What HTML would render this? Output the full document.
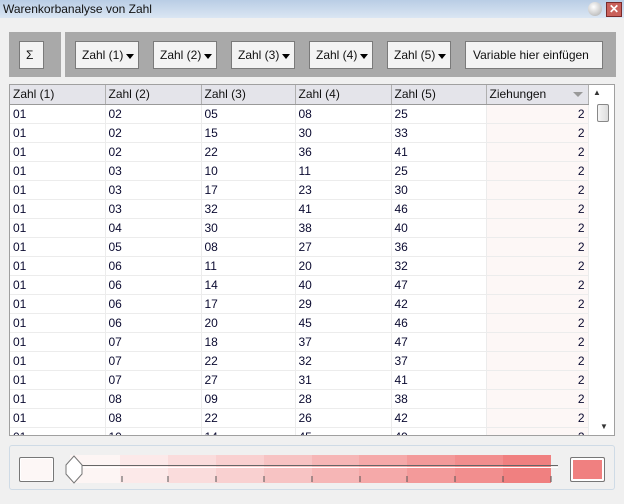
<!DOCTYPE html>
<html><head><style>
*{margin:0;padding:0;box-sizing:border-box}
body{width:624px;height:504px;background:#f0f0f0;font-family:"Liberation Sans",sans-serif;font-size:12px;position:relative;overflow:hidden;color:#111}
.abs{position:absolute}
.title{left:0;top:0;width:624px;height:18px;background:linear-gradient(#b9cde5,#dbe6f3);color:#111;padding:2px 3px;font-size:12px}
.panel{background:#a9a9a9}
.btn{background:#f3f3f3;border:1px solid #7a7a7a;display:flex;align-items:center;padding-left:6px}
.btn .ar{position:absolute;right:4px;top:12px;width:0;height:0;border-left:4px solid transparent;border-right:4px solid transparent;border-top:5px solid #000}
table{border-collapse:collapse;table-layout:fixed}
td,th{height:19px;padding:0 3px;font-weight:normal;text-align:left;white-space:nowrap;overflow:hidden;border-right:1px solid #ececec;border-bottom:1px solid #ececec;color:#0a0a30}
th{background:#e4e4ea;border-right:1px solid #b0b0b0;border-bottom:1px solid #999;height:19px;color:#111}
td.z{background:#fdf7f6;text-align:right}
</style></head><body>
<div class="abs title">Warenkorbanalyse von Zahl</div>
<div class="abs" style="left:588px;top:2px;width:14px;height:14px;border-radius:50%;background:radial-gradient(circle at 40% 35%,#fff,#aaa)"></div>
<div class="abs" style="left:606px;top:2px;width:16px;height:15px;background:#c9605a;border:1px solid #7a2a2a;color:#fff;font-size:12px;font-weight:bold;text-align:center;line-height:13px">✕</div>

<div class="abs panel" style="left:9px;top:32px;width:52px;height:45px"></div>
<div class="abs panel" style="left:65px;top:32px;width:551px;height:45px"></div>
<div class="abs btn" style="left:19px;top:41px;width:25px;height:28px">Σ</div>
<div class="abs btn" style="left:75px;top:41px;width:40px;height:28px">Zahl (1)<span class="ar"></span></div>
<div class="abs btn" style="left:153px;top:41px;width:64px;height:28px">Zahl (2)<span class="ar"></span></div>
<div class="abs btn" style="left:231px;top:41px;width:64px;height:28px">Zahl (3)<span class="ar"></span></div>
<div class="abs btn" style="left:309px;top:41px;width:64px;height:28px">Zahl (4)<span class="ar"></span></div>
<div class="abs btn" style="left:387px;top:41px;width:64px;height:28px">Zahl (5)<span class="ar"></span></div>
<div class="abs btn" style="left:465px;top:41px;width:138px;height:28px;padding-left:7px">Variable hier einfügen</div>
<div class="abs btn" style="left:75px;top:41px;width:64px;height:28px">Zahl (1)<span class="ar"></span></div>

<div class="abs" style="left:9px;top:84px;width:606px;height:352px;background:#fff;border:1px solid #a0a0a0;overflow:hidden">
<table style="width:578px">
<colgroup><col style="width:95px"><col style="width:96px"><col style="width:94px"><col style="width:96px"><col style="width:95px"><col style="width:102px"></colgroup>
<tr><th>Zahl (1)</th><th>Zahl (2)</th><th>Zahl (3)</th><th>Zahl (4)</th><th>Zahl (5)</th><th style="position:relative">Ziehungen<span style="position:absolute;right:5px;top:7px;border-left:5px solid transparent;border-right:5px solid transparent;border-top:5px solid #999"></span></th></tr>
<tr><td>01</td><td>02</td><td>05</td><td>08</td><td>25</td><td class="z">2</td></tr>
<tr><td>01</td><td>02</td><td>15</td><td>30</td><td>33</td><td class="z">2</td></tr>
<tr><td>01</td><td>02</td><td>22</td><td>36</td><td>41</td><td class="z">2</td></tr>
<tr><td>01</td><td>03</td><td>10</td><td>11</td><td>25</td><td class="z">2</td></tr>
<tr><td>01</td><td>03</td><td>17</td><td>23</td><td>30</td><td class="z">2</td></tr>
<tr><td>01</td><td>03</td><td>32</td><td>41</td><td>46</td><td class="z">2</td></tr>
<tr><td>01</td><td>04</td><td>30</td><td>38</td><td>40</td><td class="z">2</td></tr>
<tr><td>01</td><td>05</td><td>08</td><td>27</td><td>36</td><td class="z">2</td></tr>
<tr><td>01</td><td>06</td><td>11</td><td>20</td><td>32</td><td class="z">2</td></tr>
<tr><td>01</td><td>06</td><td>14</td><td>40</td><td>47</td><td class="z">2</td></tr>
<tr><td>01</td><td>06</td><td>17</td><td>29</td><td>42</td><td class="z">2</td></tr>
<tr><td>01</td><td>06</td><td>20</td><td>45</td><td>46</td><td class="z">2</td></tr>
<tr><td>01</td><td>07</td><td>18</td><td>37</td><td>47</td><td class="z">2</td></tr>
<tr><td>01</td><td>07</td><td>22</td><td>32</td><td>37</td><td class="z">2</td></tr>
<tr><td>01</td><td>07</td><td>27</td><td>31</td><td>41</td><td class="z">2</td></tr>
<tr><td>01</td><td>08</td><td>09</td><td>28</td><td>38</td><td class="z">2</td></tr>
<tr><td>01</td><td>08</td><td>22</td><td>26</td><td>42</td><td class="z">2</td></tr>
<tr><td>01</td><td>10</td><td>14</td><td>45</td><td>49</td><td class="z">2</td></tr>
</table>
</div>
<div class="abs" style="left:593px;top:88px;color:#333;font-size:8px">▲</div>
<div class="abs" style="left:597px;top:104px;width:12px;height:18px;border:1px solid #888;background:linear-gradient(90deg,#f5f5f5,#ddd);border-radius:2px"></div>
<div class="abs" style="left:600px;top:422px;color:#333;font-size:8px">▼</div>

<div class="abs" style="left:9px;top:445px;width:606px;height:45px;border:1px solid #cfdbe6;border-radius:3px"></div>
<div class="abs" style="left:19px;top:457px;width:35px;height:25px;border:1px solid #777;border-radius:2px;background:#fdf7f6;box-shadow:inset 0 0 0 1px #fff"></div>
<div class="abs" style="left:70px;top:455px;height:28px;width:481px;display:flex">
<div style="flex:50;background:#fdf5f4"></div><div style="flex:48;background:#fce9e9"></div><div style="flex:48;background:#fadcdc"></div><div style="flex:48;background:#f9d0d0"></div><div style="flex:48;background:#f7c3c3"></div><div style="flex:47;background:#f6b6b6"></div><div style="flex:48;background:#f5a9a9"></div><div style="flex:48;background:#f39a9a"></div><div style="flex:48;background:#f28e8e"></div><div style="flex:48;background:#f08080"></div></div>
<div class="abs" style="left:80px;top:465px;width:478px;height:3px;border-top:1px solid #666;border-bottom:1px solid #fff"></div>
<svg class="abs" style="left:62px;top:455px" width="500" height="30">
<polygon points="12,1 20,10 20,19 12,28 4,19 4,10" fill="#fff" stroke="#777"/>
<g stroke="#555"><line x1="60" y1="21" x2="60" y2="27"/><line x1="106" y1="21" x2="106" y2="27"/><line x1="154" y1="21" x2="154" y2="27"/><line x1="202" y1="21" x2="202" y2="27"/><line x1="250" y1="21" x2="250" y2="27"/><line x1="298" y1="21" x2="298" y2="27"/><line x1="345" y1="21" x2="345" y2="27"/><line x1="393" y1="21" x2="393" y2="27"/><line x1="441" y1="21" x2="441" y2="27"/><line x1="489" y1="21" x2="489" y2="27"/></g></svg>
<div class="abs" style="left:570px;top:457px;width:35px;height:25px;border:1px solid #777;border-radius:2px;background:#f08080;box-shadow:inset 0 0 0 2px #fff"></div>
</body></html>
